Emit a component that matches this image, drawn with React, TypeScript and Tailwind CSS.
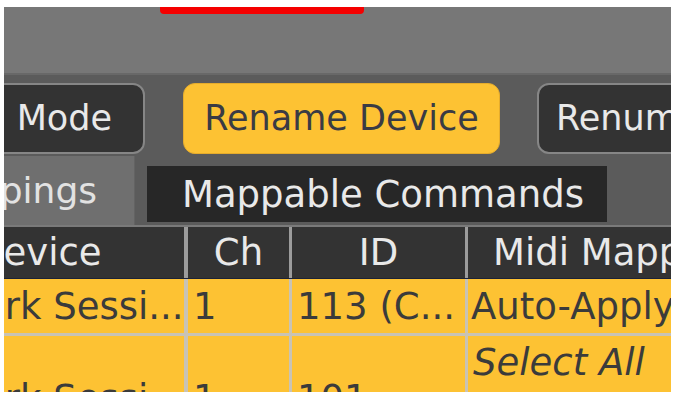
import React from "react";

// visible columns of the mappings table
type Row = {
  device: string;
  ch: string;
  id: string;
  mapping: string;
  italic?: boolean;
  height: string;
};

const rows: Row[] = [
  { device: "Network Sessi...", ch: "1", id: "113 (C...", mapping: "Auto-Apply", height: "h-[57px]" },
  { device: "Network Sessi...", ch: "1", id: "101", mapping: "Select All", italic: true, height: "h-[128px]" },
];

export default function App() {
  return (
    <div className="w-[676px] h-[398px] bg-white overflow-hidden pt-[7px] pl-[4px] pr-[5px] font-['DejaVu_Sans',sans-serif]">
      <div className="h-[385px] overflow-hidden bg-[#5b5b5b]">
        {/* top strip with the red marker */}
        <div className="h-[66px] bg-[#777777]">
          <div className="ml-[156px] w-[204px] h-[7px] bg-[#f40000] rounded-b-[4px]" />
        </div>
        <div className="h-[2px] bg-[#686868]" />

        {/* action buttons */}
        <div className="flex pt-[8px] h-[79px] text-[35px] leading-none">
          <div className="-ml-[20px] w-[161px] h-[71px] shrink-0 flex items-center justify-end pr-[31px] bg-[#333333] border-2 border-[#868686] rounded-[12px] text-[#e9e9e9] overflow-hidden">
            Mode
          </div>
          <div className="ml-[38px] w-[317px] h-[71px] shrink-0 flex items-center justify-center bg-[#fdc233] border border-[#e6ac2c] rounded-[12px] text-[#3a3b44]">
            Rename Device
          </div>
          <div className="ml-[37px] w-[220px] h-[71px] shrink-0 flex items-center pl-[17px] bg-[#333333] border-2 border-[#868686] rounded-[12px] text-[#e9e9e9] whitespace-nowrap overflow-hidden">
            Renumber
          </div>
        </div>

        {/* tabs */}
        <div className="flex h-[71px] text-[36px] leading-none">
          <div className="mt-[2px] w-[131px] h-[69px] shrink-0 flex items-center justify-end pr-[37px] bg-[#6f6f6f] border-r border-[#636363] text-[#e2e2e2] whitespace-nowrap overflow-hidden">
            Mappings
          </div>
          <div className="ml-[12px] mt-[12px] w-[460px] h-[56px] shrink-0 flex items-center pl-[35px] bg-[#272727] text-[#e9e9e9] text-[37px] whitespace-nowrap">
            Mappable Commands
          </div>
        </div>
        <div className="h-[2px] bg-[#7a7a7a]" />

        {/* table header */}
        <div className="flex h-[52px] bg-[#333333] border-b border-[#1c2236] text-[37px] leading-none text-[#e9e9e9]">
          <div className="w-[184px] shrink-0 flex items-center border-r-4 border-[#9c9c9c] overflow-hidden whitespace-nowrap">
            <span className="-ml-[29px]">Device</span>
          </div>
          <div className="w-[104px] shrink-0 flex items-center justify-center border-r-[3px] border-[#9c9c9c]">Ch</div>
          <div className="w-[176px] shrink-0 flex items-center justify-center border-r-[3px] border-[#9c9c9c]">ID</div>
          <div className="flex-1 flex items-center pl-[25px] whitespace-nowrap overflow-hidden">Midi Mapping</div>
        </div>

        {/* table rows */}
        {rows.map((r, i) => (
          <div key={i} className={`flex ${r.height} bg-[#fdc233] border-b-[3px] border-[#c9c3b4] text-[37px] leading-none text-[#3b3b3b]`}>
            <div className="w-[184px] shrink-0 flex items-center border-r-4 border-[#c9c3b4] overflow-hidden whitespace-nowrap">
              <span className="-ml-[117px]">{r.device}</span>
            </div>
            <div className="w-[104px] shrink-0 flex items-center pl-[5px] border-r-[3px] border-[#c9c3b4]">{r.ch}</div>
            <div className="w-[176px] shrink-0 flex items-center pl-[5px] border-r-[3px] border-[#c9c3b4] whitespace-nowrap overflow-hidden">{r.id}</div>
            {r.italic ? (
              <div className="flex-1 pl-[5px] pt-[8px] italic whitespace-nowrap overflow-hidden">{r.mapping}</div>
            ) : (
              <div className="flex-1 flex items-center pl-[3px] whitespace-nowrap overflow-hidden">{r.mapping}</div>
            )}
          </div>
        ))}
      </div>
    </div>
  );
}
